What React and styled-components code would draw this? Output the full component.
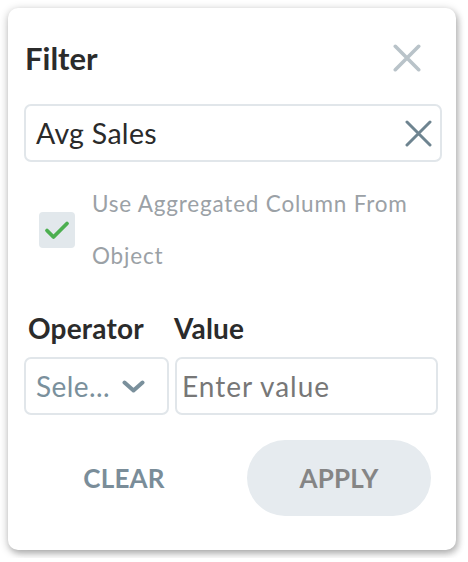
import React from "react";
import styled, { createGlobalStyle } from "styled-components";

const Global = createGlobalStyle`
  html, body { margin: 0; padding: 0; background: #ffffff; }
  body { padding: 8px; font-family: Lato, "Open Sans", sans-serif; }
  * { box-sizing: border-box; }
`;

const Card = styled.div`
  width: 448px;
  height: 542px;
  background: #fff;
  border-radius: 10px;
  box-shadow: 0 2px 8px rgba(0, 0, 0, 0.28), 3px 4px 6px rgba(0, 0, 0, 0.14);
  padding: 16px 14px 0 16px;
  display: flex;
  flex-direction: column;
`;

const Header = styled.div`
  height: 68px;
  display: flex;
  align-items: center;
  justify-content: space-between;
  margin-bottom: 12px;
`;

const Title = styled.h1`
  margin: 0 0 0 1px;
  font-size: 31px;
  font-weight: 700;
  color: #2b2b2b;
  line-height: 68px;
`;

const IconButton = styled.button`
  border: 0;
  background: none;
  padding: 0;
  display: flex;
  align-items: center;
  justify-content: center;
  width: ${(p) => p.$size}px;
  height: ${(p) => p.$size}px;
  margin-right: ${(p) => p.$mr}px;
  cursor: pointer;
`;

const FieldBox = styled.div`
  height: 58px;
  border: 2px solid #e1e6ea;
  border-radius: 7px;
  display: flex;
  align-items: center;
  padding: 0 8px 0 10px;
`;

const FieldText = styled.span`
  flex: 1;
  font-size: 28.5px;
  color: #2a2a2a;
  letter-spacing: 0.3px;
`;

const CheckRow = styled.div`
  margin-top: 16px;
  display: flex;
  align-items: center;
  padding-left: 15px;
  gap: 17px;
`;

const CheckBox = styled.div`
  width: 36px;
  height: 36px;
  flex: none;
  border-radius: 4px;
  background: #e2e8ec;
  display: flex;
  align-items: center;
  justify-content: center;
`;

const CheckLabel = styled.span`
  font-size: 22.5px;
  line-height: 52px;
  color: #9ba1a6;
  letter-spacing: 0.8px;
  width: 330px;
`;

const LabelsRow = styled.div`
  margin-top: 29px;
  display: grid;
  grid-template-columns: 146px 1fr;
  padding-left: 4px;
`;

const FieldLabel = styled.span`
  font-size: 28px;
  font-weight: 700;
  line-height: 34px;
  color: #2b2b2b;
  letter-spacing: 0.2px;
`;

const InputsRow = styled.div`
  margin-top: 12px;
  display: grid;
  grid-template-columns: 145px 263px;
  gap: 6px;
`;

const SelectBox = styled.div`
  height: 58px;
  border: 2px solid #e1e6ea;
  border-radius: 7px;
  display: flex;
  align-items: center;
  justify-content: space-between;
  padding: 0 22px 0 10px;
`;

const SelectText = styled.span`
  font-size: 28px;
  color: #7a909c;
  letter-spacing: 0.4px;
`;

const ValueInput = styled.input`
  height: 58px;
  border: 2px solid #e1e6ea;
  border-radius: 7px;
  padding: 0 5px;
  font-family: Lato, "Open Sans", sans-serif;
  font-size: 28px;
  letter-spacing: 1px;
  color: #2a2a2a;
  outline: none;
  &::placeholder { color: #777777; }
`;

const ButtonsRow = styled.div`
  margin-top: 25px;
  display: flex;
  gap: 31px;
  padding-left: 8px;
`;

const ActionButton = styled.button`
  width: 184px;
  height: 76px;
  border: 0;
  border-radius: 38px;
  background: ${(p) => (p.$filled ? "#e6ebef" : "transparent")};
  color: ${(p) => (p.$filled ? "#858585" : "#7a8d99")};
  font-family: Lato, "Open Sans", sans-serif;
  font-size: 26px;
  font-weight: 700;
  letter-spacing: 0.2px;
  cursor: pointer;
`;

const CloseIcon = ({ size, color, stroke }) => (
  <svg width={size} height={size} viewBox={`0 0 ${size} ${size}`}>
    <path
      d={`M${stroke / 2 + 0.5} ${stroke / 2 + 0.5} L${size - stroke / 2 - 0.5} ${size - stroke / 2 - 0.5} M${size - stroke / 2 - 0.5} ${stroke / 2 + 0.5} L${stroke / 2 + 0.5} ${size - stroke / 2 - 0.5}`}
      stroke={color}
      strokeWidth={stroke}
      strokeLinecap="round"
      fill="none"
    />
  </svg>
);

export default function App() {
  return (
    <>
      <Global />
      <Card>
        <Header>
          <Title>Filter</Title>
          <IconButton $size={28} $mr={21} aria-label="Close">
            <CloseIcon size={28} color="#b9c3c9" stroke={3.6} />
          </IconButton>
        </Header>
        <FieldBox>
          <FieldText>Avg Sales</FieldText>
          <IconButton $size={27} $mr={0} aria-label="Clear field">
            <CloseIcon size={27} color="#6e8490" stroke={3} />
          </IconButton>
        </FieldBox>
        <CheckRow>
          <CheckBox>
            <svg width="26" height="20" viewBox="0 0 26 20">
              <path
                d="M3 10.5 L9.5 17 L23 3.5"
                stroke="#4caf50"
                strokeWidth="3.8"
                strokeLinecap="round"
                strokeLinejoin="round"
                fill="none"
              />
            </svg>
          </CheckBox>
          <CheckLabel>Use Aggregated Column From Object</CheckLabel>
        </CheckRow>
        <LabelsRow>
          <FieldLabel>Operator</FieldLabel>
          <FieldLabel>Value</FieldLabel>
        </LabelsRow>
        <InputsRow>
          <SelectBox>
            <SelectText>Sele...</SelectText>
            <svg width="23" height="13" viewBox="0 0 23 13">
              <path
                d="M2.5 2.5 L11.5 10.5 L20.5 2.5"
                stroke="#7a909c"
                strokeWidth="4"
                strokeLinecap="round"
                strokeLinejoin="round"
                fill="none"
              />
            </svg>
          </SelectBox>
          <ValueInput placeholder="Enter value" />
        </InputsRow>
        <ButtonsRow>
          <ActionButton>CLEAR</ActionButton>
          <ActionButton $filled>APPLY</ActionButton>
        </ButtonsRow>
      </Card>
    </>
  );
}
